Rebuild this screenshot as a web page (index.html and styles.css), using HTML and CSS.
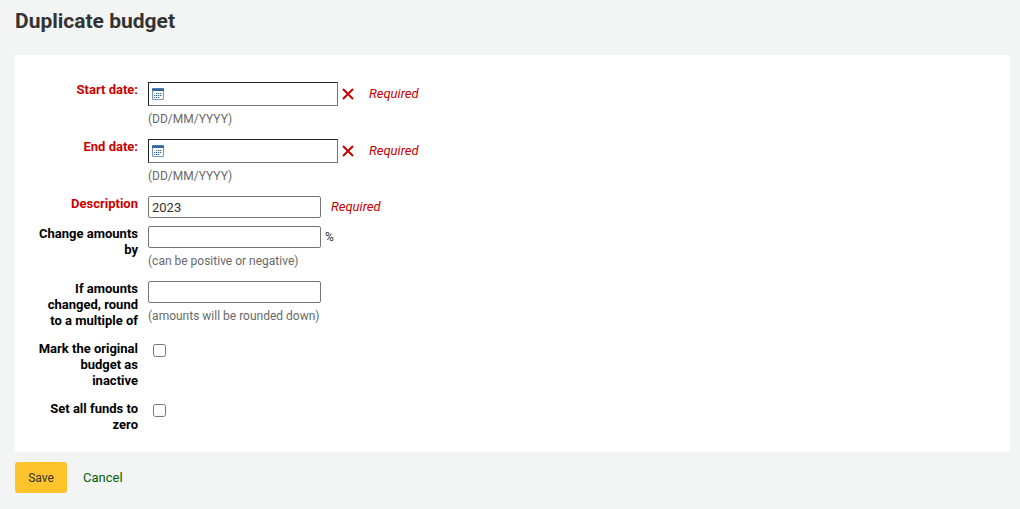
FILE: index.html
```
<!DOCTYPE html>
<html lang="en">
<head>
<meta charset="utf-8">
<title>Duplicate budget</title>
<link rel="stylesheet" href="styles.css">
</head>
<body>
<main>
<h1>Duplicate budget</h1>
<form>
<fieldset class="panel">
<div class="row">
<label class="required" for="start">Start date:</label>
<div class="field">
<div class="line"><span class="date-box"><svg class="calendar" viewBox="0 0 12 12" aria-hidden="true"><rect x=".5" y=".5" width="11" height="11" rx=".5" fill="#fff" stroke="#6f96bd"/><path d="M0 .5h12V3H0z" fill="#31659c"/><path d="M4 5.500h6M2 7.500h8M2 9.500h6" stroke="#31659c" stroke-dasharray="1.300 .7"/></svg><input type="text" id="start"></span><button class="clear" type="button" aria-label="Clear start date"><svg viewBox="0 0 12 12"><path d="M1 1l10 10M11 1L1 11" stroke="#c00" stroke-width="2"/></svg></button><span class="note">Required</span></div>
<div class="hint">(DD/MM/YYYY)</div>
</div>
</div>
<div class="row">
<label class="required" for="end">End date:</label>
<div class="field">
<div class="line"><span class="date-box"><svg class="calendar" viewBox="0 0 12 12" aria-hidden="true"><rect x=".5" y=".5" width="11" height="11" rx=".5" fill="#fff" stroke="#6f96bd"/><path d="M0 .5h12V3H0z" fill="#31659c"/><path d="M4 5.500h6M2 7.500h8M2 9.500h6" stroke="#31659c" stroke-dasharray="1.300 .7"/></svg><input type="text" id="end"></span><button class="clear" type="button" aria-label="Clear end date"><svg viewBox="0 0 12 12"><path d="M1 1l10 10M11 1L1 11" stroke="#c00" stroke-width="2"/></svg></button><span class="note">Required</span></div>
<div class="hint">(DD/MM/YYYY)</div>
</div>
</div>
<div class="row short">
<label class="required" for="description">Description</label>
<div class="field"><div class="line"><input class="text" type="text" id="description" value="2023"><span class="note">Required</span></div></div>
</div>
<div class="row">
<label for="change">Change amounts by</label>
<div class="field"><div class="line"><input class="text" type="text" id="change"><span class="percent">%</span></div><div class="hint">(can be positive or negative)</div></div>
</div>
<div class="row">
<label for="round">If amounts changed, round to a multiple of</label>
<div class="field"><div class="line"><input class="text" type="text" id="round"></div><div class="hint">(amounts will be rounded down)</div></div>
</div>
<div class="row">
<label for="inactive">Mark the original budget as inactive</label>
<div class="field"><input type="checkbox" id="inactive"></div>
</div>
<div class="row">
<label for="zero">Set all funds to zero</label>
<div class="field"><input type="checkbox" id="zero"></div>
</div>
</fieldset>
<div class="actions"><button class="save" type="submit">Save</button><a href="#">Cancel</a></div>
</form>
</main>
</body>
</html>
```
FILE: styles.css
```
* { box-sizing: border-box; }
body { margin: 0; background: #f3f4f4; color: #333; font: 13px/16px Roboto, sans-serif; }
main { padding: 8px 10px 16px 15px; }
h1 { margin: 0 0 21px; font-size: 21px; line-height: 26px; font-weight: 700; }
.panel { margin: 0; border: 0; padding: 27px 23px 19px; background: #fff; min-width: 0; }
.row { display: flex; gap: 10px; margin-bottom: 12px; }
.row:last-child { margin-bottom: 0; }
.short { margin-bottom: 8px; }
label { width: 100px; text-align: right; font-weight: 700; color: #000; }
.required, .note { color: #c00; }
.line { display: flex; align-items: center; }
.date-box { display: flex; align-items: center; width: 190px; height: 24px; padding-left: 3px; border: 1px solid; border-color: #222 #767676 #767676 #222; background: #fff; }
.date-box input { flex: 1; min-width: 0; border: 0; outline: 0; background: transparent; font: inherit; }
.calendar { width: 12px; height: 12px; }
.clear { display: flex; width: 12px; height: 12px; margin: 0 11px 0 4px; padding: 0; border: 0; background: none; }
.clear svg { width: 12px; height: 12px; }
.note { font-style: italic; margin-left: 4px; }
.text + .note { margin-left: 10px; }
.text { width: 173px; height: 22px; padding: 0 3px; border: 1px solid #767676; border-radius: 2px; color: #333; font: inherit; }
.hint { margin-top: 5px; color: #696969; font-size: 12px; }
.percent { margin-left: 4px; font-size: 12px; }
input[type="checkbox"] { display: block; width: 13px; height: 13px; margin: 3px 5px; }
.actions { display: flex; align-items: center; gap: 16px; margin-top: 10px; }
.save { width: 52px; height: 31px; border: 0; border-radius: 3px; padding: 0; background: #ffc32b; color: #333; font: inherit; font-size: 12px; }
a { color: #006100; text-decoration: none; }
```
